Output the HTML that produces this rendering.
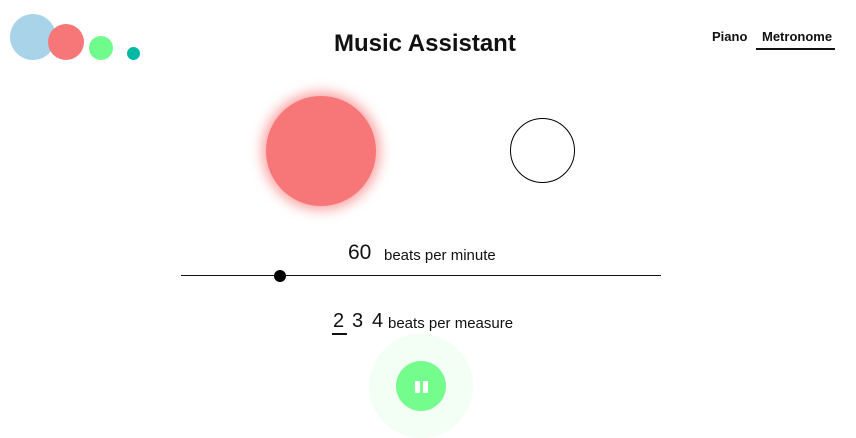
<!DOCTYPE html><html><head><style>
body{margin:0;width:856px;height:436px;overflow:hidden;background:#fff;font-family:"Liberation Sans",sans-serif;position:relative;color:#111}
.c{position:absolute;border-radius:50%}
.t{position:absolute;white-space:nowrap}
</style></head><body>
<div class="c" style="left:10px;top:14px;width:46px;height:46px;background:#a9d3e8"></div>
<div class="c" style="left:48px;top:24px;width:36px;height:36px;background:#f77778"></div>
<div class="c" style="left:89px;top:36px;width:24px;height:24px;background:#70fc8c"></div>
<div class="c" style="left:127px;top:47px;width:13px;height:13px;background:#06b8a6"></div>
<div class="t" style="left:334px;top:30px;font-size:24px;font-weight:bold">Music Assistant</div>
<div class="t" style="left:712px;top:29px;font-size:13px;font-weight:bold">Piano</div>
<div class="t" style="left:762px;top:29px;font-size:13px;font-weight:bold">Metronome</div>
<div style="position:absolute;left:756px;top:48px;width:79px;height:2px;background:#111"></div>
<div class="c" style="left:266px;top:96px;width:110px;height:110px;background:#f77778;box-shadow:0 0 12px 4px rgba(247,100,100,.6)"></div>
<div class="c" style="left:510px;top:118px;width:65px;height:65px;border:1px solid #000;box-sizing:border-box"></div>
<div class="t" style="left:348px;top:241px;font-size:21px">60</div>
<div class="t" style="left:384px;top:247px;font-size:15px">beats per minute</div>
<div style="position:absolute;left:181px;top:275px;width:480px;height:1px;background:#111"></div>
<div class="c" style="left:274px;top:270px;width:12px;height:12px;background:#000"></div>
<div class="t" style="left:333px;top:310px;font-size:20px">2</div>
<div style="position:absolute;left:332px;top:333px;width:15px;height:2px;background:#111"></div>
<div class="t" style="left:352px;top:310px;font-size:20px">3</div>
<div class="t" style="left:372px;top:310px;font-size:20px">4</div>
<div class="t" style="left:388px;top:315px;font-size:15px">beats per measure</div>
<div class="c" style="left:369px;top:334px;width:104px;height:104px;background:#f3fef5"></div>
<div class="c" style="left:396px;top:361px;width:50px;height:50px;background:#74fd8d"></div>
<div style="position:absolute;left:415px;top:381px;width:5px;height:12px;background:#fff;border-radius:1px"></div>
<div style="position:absolute;left:423px;top:381px;width:5px;height:12px;background:#fff;border-radius:1px"></div>
</body></html>
